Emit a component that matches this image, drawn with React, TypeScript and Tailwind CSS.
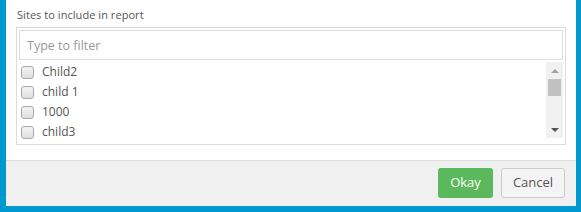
import { useState } from 'react'

const sites = ['Child2', 'child 1', '1000', 'child3']

export default function App() {
  const [filter, setFilter] = useState('')
  const shown = sites.filter((s) => s.toLowerCase().includes(filter.toLowerCase()))

  return (
    <div
      className="flex h-[212px] w-[581px] flex-col bg-[#0099cf] pb-[6px] pl-[6px] pr-[5px]"
      style={{ fontFamily: '"Open Sans", "Liberation Sans", sans-serif' }}
    >
      <div className="flex flex-1 flex-col bg-white">
        {/* body */}
        <div className="h-[161px] border-b border-[#dddddd] px-[10px] pt-[6px]">
          <p className="pl-[1px] text-[11px] leading-[18px] tracking-[0.05px] text-[#555555]">Sites to include in report</p>
          <div className="mt-[3px] h-[118px] border border-[#dddddd] p-[2px]">
            <input
              value={filter}
              onChange={(e) => setFilter(e.target.value)}
              placeholder="Type to filter"
              className="h-[30px] w-full border border-[#dddddd] px-[7px] text-[12.5px] text-[#555555] outline-none placeholder:text-[#999999]"
            />
            <div className="mt-[2px] flex h-[80px] items-start">
              <ul className="h-[80px] flex-1 overflow-hidden">
                {shown.map((s) => (
                  <li key={s} className="flex h-[20px] items-center pl-[2px] text-[12px] text-[#555555]">
                    <span className="mr-[8px] h-[13px] w-[13px] rounded-[3px] border border-[#a9a9a9] bg-gradient-to-b from-[#f4f4f4] to-[#dedede]" />
                    {s}
                  </li>
                ))}
              </ul>
              <div className="flex h-[76px] w-[17px] flex-col items-center bg-[#f1f1f1]">
                <div className="flex h-[17px] items-center justify-center">
                  <span className="h-0 w-0 border-x-[4px] border-b-[4px] border-x-transparent border-b-[#a3a3a3]" />
                </div>
                <div className="h-[17px] w-[13px] bg-[#c1c1c1]" />
                <div className="flex-1" />
                <div className="flex h-[17px] items-center justify-center">
                  <span className="h-0 w-0 border-x-[4px] border-t-[4px] border-x-transparent border-t-[#505050]" />
                </div>
              </div>
            </div>
          </div>
        </div>
        {/* footer */}
        <div className="flex flex-1 items-start justify-end gap-[8px] bg-[#f0f0f0] pr-[11px] pt-[7px]">
          <button className="h-[30px] w-[55px] rounded-[3px] bg-[#5cb85c] text-[13px] text-white">Okay</button>
          <button className="h-[30px] w-[64px] rounded-[3px] border border-[#cccccc] bg-[#f4f4f4] text-[13px] text-[#555555]">
            Cancel
          </button>
        </div>
      </div>
    </div>
  )
}
